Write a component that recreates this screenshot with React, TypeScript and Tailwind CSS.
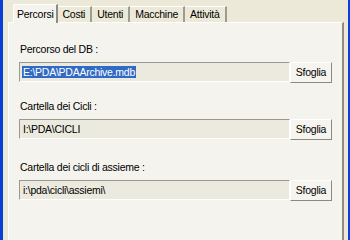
export default function App() {
  const tabs = ["Percorsi", "Costi", "Utenti", "Macchine", "Attività"];
  const fields = [
    { label: "Percorso del DB :", value: "E:\\PDA\\PDAArchive.mdb", selected: true, mt: "mt-[20px]" },
    { label: "Cartella dei Cicli :", value: "I:\\PDA\\CICLI", selected: false, mt: "mt-[17px]" },
    { label: "Cartella dei cicli di assieme :", value: "i:\\pda\\cicli\\assiemi\\", selected: false, mt: "mt-[21px]" },
  ];

  return (
    <div className="w-[350px] h-[240px] overflow-hidden flex bg-[#ECE9D8] font-['Liberation_Sans',sans-serif] text-[10.5px] tracking-[-0.25px] leading-[13px] text-black">
      <div className="w-[3px] shrink-0 bg-[#0B3FD8]" />
      <div className="flex-1 flex flex-col pl-[5px] pr-[4px] pt-[4px]">
        {/* tab strip */}
        <div className="flex items-end h-[18px] pl-[5px] relative z-10">
          {tabs.map((t, i) =>
            i === 0 ? (
              <div
                key={t}
                className="h-[19px] -mb-[1px] pl-[3px] pr-[2px] pt-[3px] bg-[#F4F3EE] border-l border-t border-white border-r-2 border-r-[#8E8C82] rounded-tl-[2px]"
              >
                {t}
              </div>
            ) : (
              <div
                key={t}
                className="h-[16px] pl-[5px] pr-[5px] pt-[1px] border-t border-white border-r-2 border-r-[#9E9C92]"
              >
                {t}
              </div>
            )
          )}
        </div>
        {/* panel */}
        <div className="flex-1 flex flex-col bg-[#F4F3EE] border-l border-t border-white border-r-2 border-r-[#8E8C82] px-[10px]">
          {fields.map((f) => (
            <div key={f.label} className={`flex flex-col ${f.mt}`}>
              <div className="pl-[1px] mb-[6px]">{f.label}</div>
              <div className="flex items-start">
                <div className="w-[271px] h-[20px] flex items-center bg-[#ECEADF] border-t border-l border-[#9A998F] border-b border-r border-b-white border-r-white pl-[2px]">
                  {f.selected ? (
                    <span className="bg-[#316AC5] text-white leading-[12px] px-[1px]">{f.value}</span>
                  ) : (
                    <span className="px-[1px]">{f.value}</span>
                  )}
                </div>
                <button className="w-[42px] h-[21px] flex items-center justify-center bg-[#F5F4EF] border-t border-l border-white border-b border-r border-b-[#8C8A80] border-r-[#8C8A80]">
                  Sfoglia
                </button>
              </div>
            </div>
          ))}
        </div>
      </div>
      <div className="w-[3px] shrink-0 bg-[#0B3FD8]" />
    </div>
  );
}
